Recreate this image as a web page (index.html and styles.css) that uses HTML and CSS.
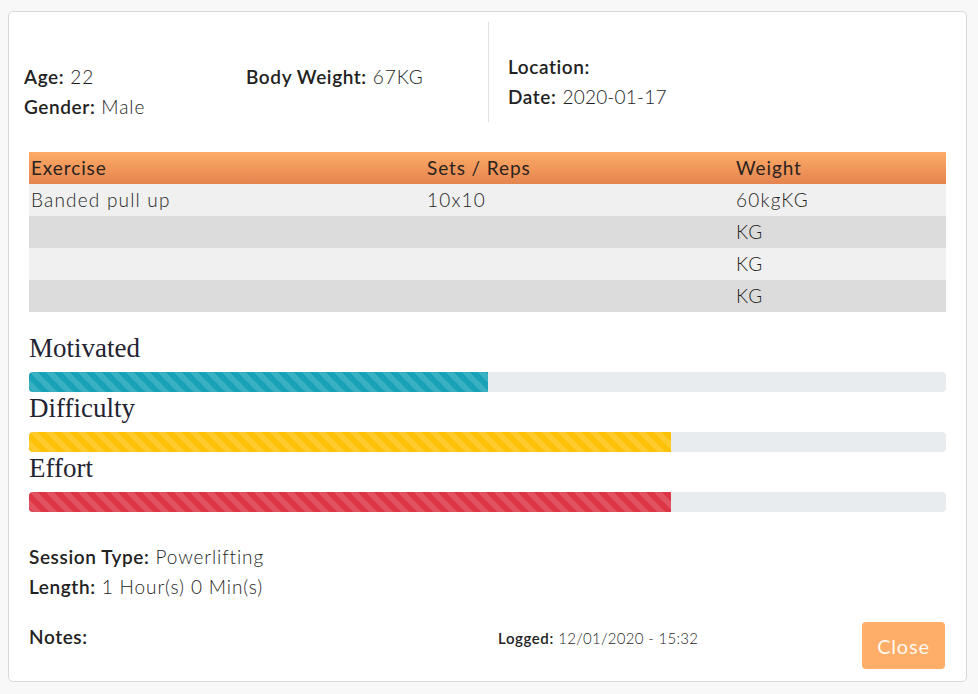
FILE: index.html
```html
<!DOCTYPE html>
<html>
<head>
<meta charset="utf-8">
<link rel="stylesheet" href="styles.css">
</head>
<body>
<div class="card">
  <div class="info">
    <div class="info-left">
      <div class="info-col1">
        <div class="line"><span class="lbl">Age:</span> 22</div>
        <div class="line"><span class="lbl">Gender:</span> Male</div>
      </div>
      <div class="info-col2">
        <div class="line"><span class="lbl">Body Weight:</span> 67KG</div>
      </div>
    </div>
    <div class="info-right">
      <div class="line"><span class="lbl">Location:</span></div>
      <div class="line"><span class="lbl">Date:</span> <span class="num">2020-01-17</span></div>
    </div>
  </div>
  <div class="content">
    <table class="ex-table">
      <thead>
        <tr><th class="c1">Exercise</th><th class="c2">Sets / Reps</th><th class="c3">Weight</th></tr>
      </thead>
      <tbody>
        <tr class="odd"><td>Banded pull up</td><td>10x10</td><td>60kgKG</td></tr>
        <tr class="even"><td></td><td></td><td>KG</td></tr>
        <tr class="odd"><td></td><td></td><td>KG</td></tr>
        <tr class="even"><td></td><td></td><td>KG</td></tr>
      </tbody>
    </table>
    <div class="rating">
      <div class="rating-title">Motivated</div>
      <div class="progress"><div class="bar bar-info" style="width:50%"></div></div>
    </div>
    <div class="rating">
      <div class="rating-title">Difficulty</div>
      <div class="progress"><div class="bar bar-warning" style="width:70%"></div></div>
    </div>
    <div class="rating">
      <div class="rating-title">Effort</div>
      <div class="progress"><div class="bar bar-danger" style="width:70%"></div></div>
    </div>
    <div class="session">
      <div class="line"><span class="lbl">Session Type:</span> Powerlifting</div>
      <div class="line"><span class="lbl">Length:</span> 1 Hour(s) 0 Min(s)</div>
    </div>
    <div class="footer">
      <div class="notes"><span class="lbl">Notes:</span></div>
      <div class="logged"><span class="lbl">Logged:</span> 12/01/2020 - 15:32</div>
      <button class="close-btn">Close</button>
    </div>
  </div>
</div>
</body>
</html>
```
FILE: styles.css
```css
* { box-sizing: border-box; }
html, body { margin: 0; padding: 0; }
body {
  background: #f8f8f8;
  font-family: "Lato", "Open Sans", sans-serif;
  font-size: 19px;
  font-weight: 300;
  letter-spacing: 0.9px;
  color: #1e1e1e;
  padding: 11px 11px 12px 8px;
}
.card {
  background: #fff;
  border: 1px solid #d8d8d8;
  border-radius: 5px;
  width: 959px;
  height: 671px;
}
.line { height: 30px; line-height: 30px; white-space: nowrap; }
.lbl { font-weight: 600; color: #222; letter-spacing: 0.6px; }
.num { letter-spacing: 0.2px; }
.info {
  display: flex;
  margin-top: 10px;
  height: 100px;
}
.info-left {
  width: 479px;
  display: flex;
  padding: 40px 0 0 15px;
}
.info-col1 { width: 222px; }
.info-right {
  border-left: 1px solid #e2e2e2;
  padding: 30px 0 0 19px;
}
.content { padding: 30px 20px 12px 20px; }
.ex-table {
  width: 917px;
  border-collapse: collapse;
  table-layout: fixed;
}
.ex-table th, .ex-table td {
  height: 32px;
  padding: 0 2px;
  text-align: left;
  line-height: 32px;
  white-space: nowrap;
}
.ex-table th {
  font-weight: 400;
  color: #2a2320;
  background: linear-gradient(to bottom, #fdab67, #e4844f);
}
.ex-table .c1 { width: 396px; }
.ex-table .c2 { width: 309px; }
.ex-table .odd td { background: #f0f0f0; }
.ex-table .even td { background: #dcdcdc; }
.ex-table td { color: #1e1e1e; letter-spacing: 1.2px; }
.ex-table + .rating { margin-top: 20px; }
.rating-title {
  font-family: "Liberation Serif", "DejaVu Serif", serif;
  font-size: 27px;
  font-weight: 400;
  letter-spacing: 0;
  line-height: 32px;
  height: 32px;
  margin-bottom: 8px;
  color: #232331;
}
.progress {
  height: 20px;
  background: #e9ecef;
  border-radius: 4px;
  overflow: hidden;
}
.bar {
  height: 100%;
  background-image: linear-gradient(45deg, rgba(255,255,255,.15) 25%, transparent 25%, transparent 50%, rgba(255,255,255,.15) 50%, rgba(255,255,255,.15) 75%, transparent 75%, transparent);
  background-size: 16px 16px;
}
.bar-info { background-color: #17a2b8; }
.bar-warning { background-color: #ffc107; }
.bar-danger { background-color: #dc3545; }
.session { margin-top: 30px; }
.footer {
  display: flex;
  align-items: flex-start;
  margin-top: 20px;
}
.notes { width: 469px; height: 30px; line-height: 30px; }
.logged { font-size: 15px; line-height: 32px; white-space: nowrap; letter-spacing: 0.3px; }
.close-btn {
  margin-left: auto;
  margin-right: 1px;
  width: 83px;
  height: 47px;
  background: #feae68;
  border: none;
  border-radius: 4px;
  color: #fff8f0;
  font-family: "Lato", "Open Sans", sans-serif;
  font-size: 20px;
  font-weight: 400;
  letter-spacing: 0.8px;
  padding: 0;
}
```
